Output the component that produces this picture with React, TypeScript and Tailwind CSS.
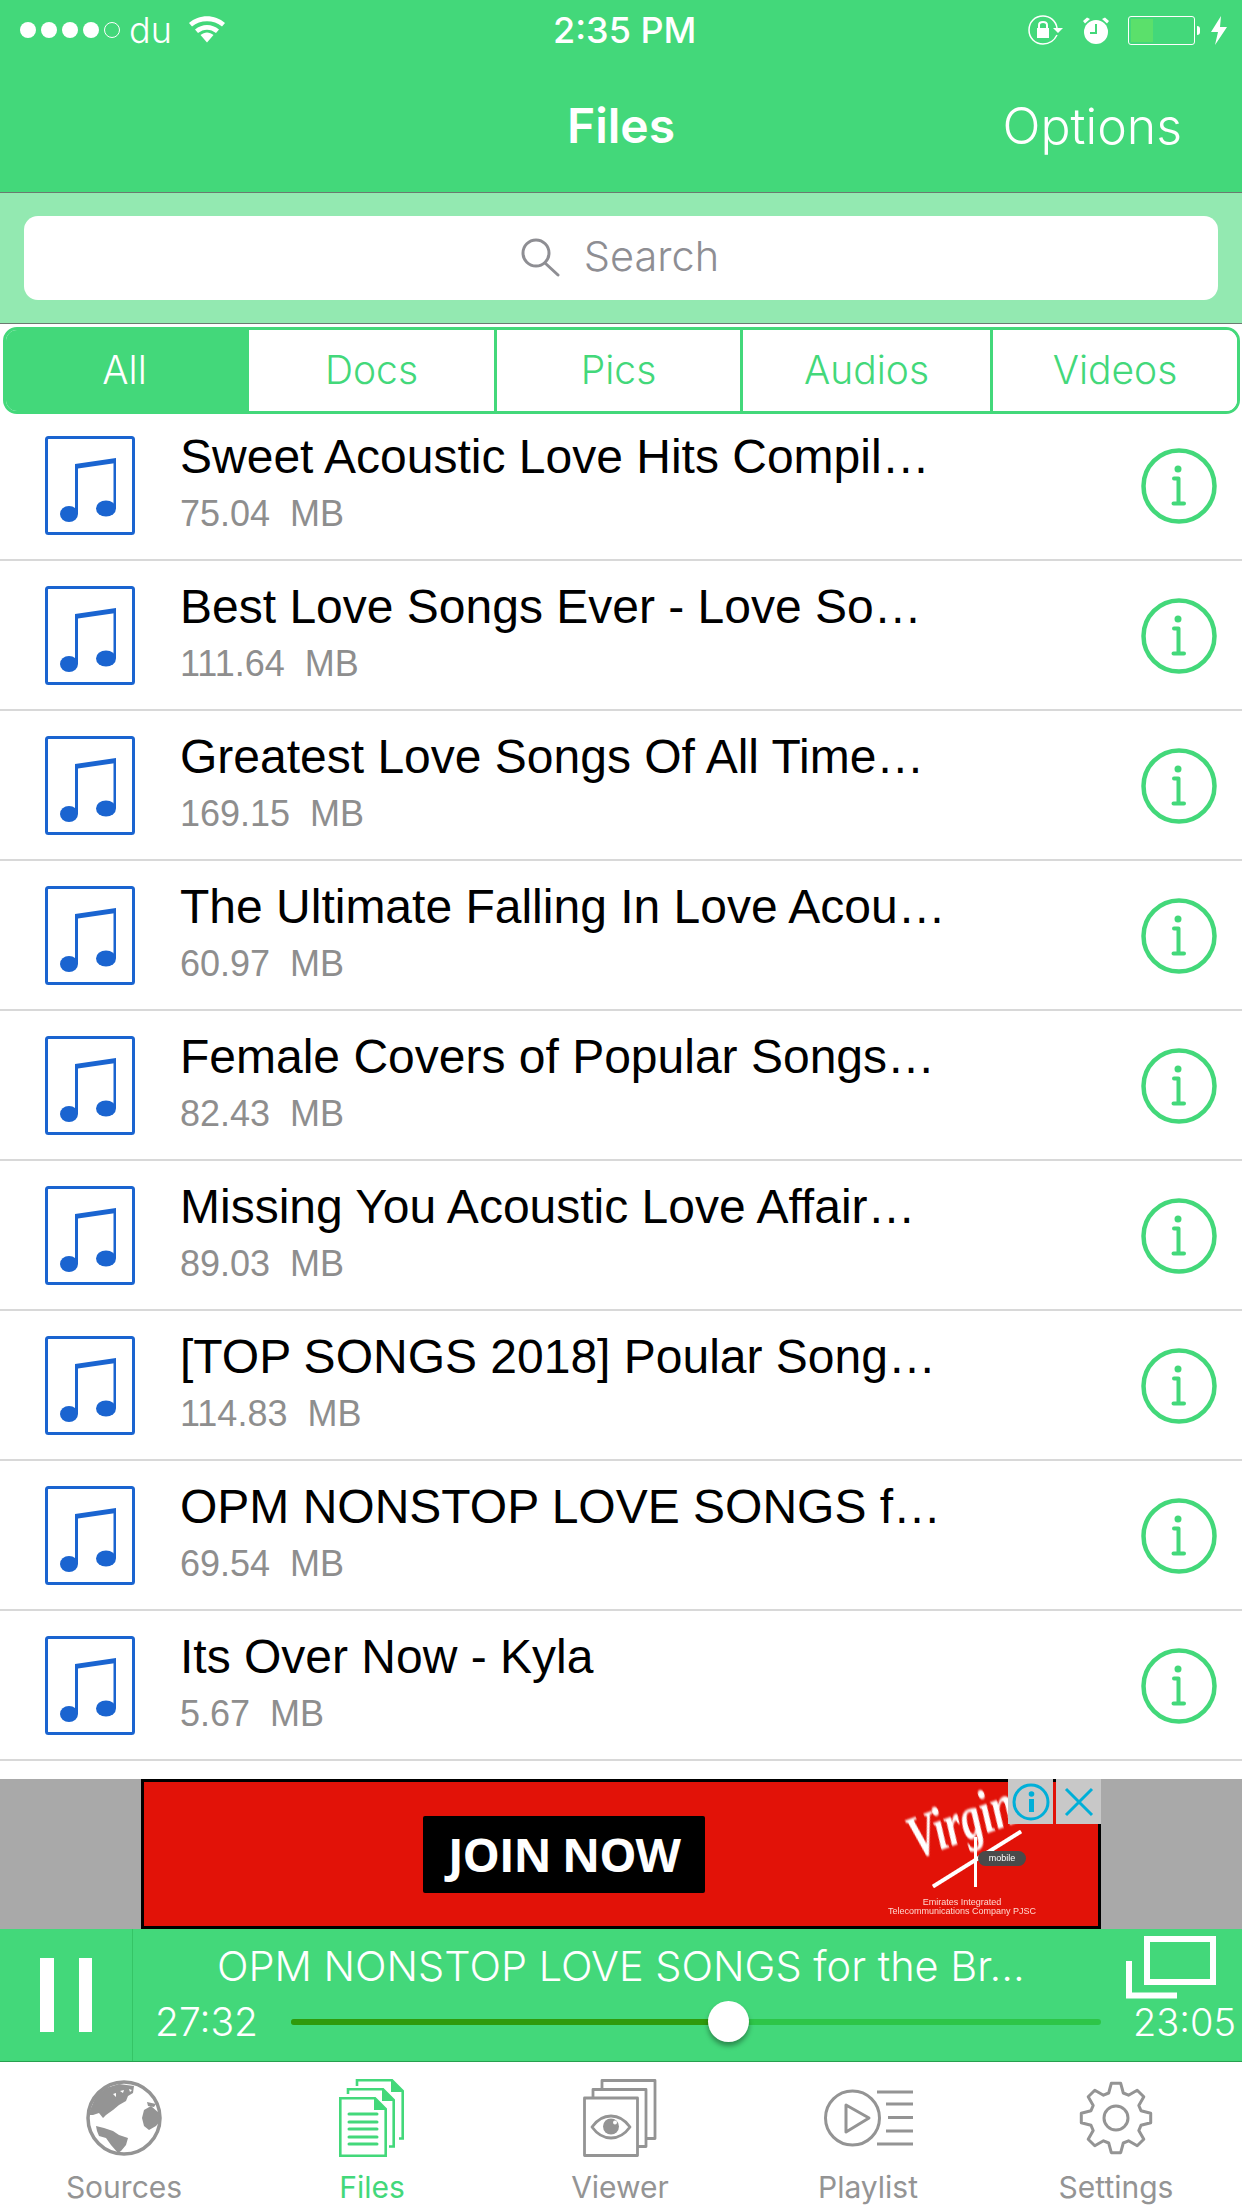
import React from 'react'

const files = [
  { title: 'Sweet Acoustic Love Hits Compil…', size: '75.04' },
  { title: 'Best Love Songs Ever - Love So…', size: '111.64' },
  { title: 'Greatest Love Songs Of All Time…', size: '169.15' },
  { title: 'The Ultimate Falling In Love Acou…', size: '60.97' },
  { title: 'Female Covers of Popular Songs…', size: '82.43' },
  { title: 'Missing You Acoustic Love Affair…', size: '89.03' },
  { title: '[TOP SONGS 2018] Poular Song…', size: '114.83' },
  { title: 'OPM NONSTOP LOVE SONGS f…', size: '69.54' },
  { title: 'Its Over Now - Kyla', size: '5.67' },
]

const GREEN = '#43d87a'
const GRAY = '#949494'

function gearPath(cx: number, cy: number, outer: number, inner: number, teeth: number) {
  const pts: string[] = []
  for (let i = 0; i < teeth; i++) {
    const step = (Math.PI * 2) / teeth
    const a = -Math.PI / 2 + i * step
    const corners: [number, number][] = [
      [inner, a - step * 0.36],
      [outer, a - step * 0.17],
      [outer, a + step * 0.17],
      [inner, a + step * 0.36],
    ]
    corners.forEach(([r, t]) => pts.push(`${(cx + r * Math.cos(t)).toFixed(1)} ${(cy + r * Math.sin(t)).toFixed(1)}`))
  }
  return 'M' + pts.join('L') + 'Z'
}

function NoteIcon() {
  return (
    <svg width="90" height="99" viewBox="0 0 90 99" className="shrink-0">
      <rect x="1.5" y="1.5" width="87" height="96" rx="2" fill="none" stroke="#1a64d0" strokeWidth="3" />
      <path d="M30 28L71 22V27L33 32.5V78H30Z" fill="#1a64d0" />
      <path d="M68.500 25H71V72H68.500Z" fill="#1a64d0" />
      <ellipse cx="24" cy="78" rx="9" ry="8" fill="#1a64d0" />
      <ellipse cx="61" cy="72.500" rx="10" ry="8" fill="#1a64d0" />
    </svg>
  )
}

function InfoIcon() {
  return (
    <svg width="76" height="76" viewBox="0 0 76 76" className="mt-[1px] shrink-0">
      <circle cx="38" cy="38" r="35.500" fill="none" stroke={GREEN} strokeWidth="4.500" />
      <circle cx="37" cy="21" r="3.500" fill={GREEN} />
      <path d="M33 30.500H37.500V55M32.500 55.500H43" fill="none" stroke={GREEN} strokeWidth="4" strokeLinecap="round" strokeLinejoin="round" />
    </svg>
  )
}

function GlobeIcon() {
  return (
    <svg width="76" height="76" viewBox="0 0 76 76">
      <circle cx="38" cy="38" r="36" fill="none" stroke={GRAY} strokeWidth="3.500" />
      <path d="M2 35L10 16L20 8L33 4L48 6L47 13L42 16L40 21L33 25L27 30L20 35L17 38L13 33L7 35Z" fill={GRAY} />
      <path d="M10 46L18 48L27 51L33 55L42 58L40 65L35 71L32 73L25 65L20 58L13 56L11 51Z" fill={GRAY} />
      <path d="M58 30L65 26L73 33L75 40L70 46L63 50L58 46L56 38Z" fill={GRAY} />
      <path d="M61 22L70 24L68 27L62 26Z" fill={GRAY} />
      <path d="M34 11L38 10L37 13ZM27 14L30 13L30 17ZM43 9L46 10L44 12Z" fill="#fff" />
    </svg>
  )
}

function FilesIcon() {
  return (
    <svg width="66" height="78" viewBox="0 0 66 78" fill="none" stroke={GREEN} strokeWidth="2.600">
      <path d="M18 7V1.300H53L63.700 12V59.500H60" />
      <path d="M9 15V10.300H44L54.700 21V67.500H50" />
      <path d="M1.300 19.300H36L46.700 30V76.700H1.300Z" />
      <path d="M52 1L64 13H52Z M43 10L55 22H43Z M35 19L47 31H35Z" fill={GREEN} stroke="none" />
      <path d="M10 35H38M10 43H38M10 50H38M10 58H38M10 65H38" strokeWidth="3" strokeLinecap="round" />
    </svg>
  )
}

function ViewerIcon() {
  return (
    <svg width="74" height="78" viewBox="0 0 74 78" fill="none" stroke={GRAY} strokeWidth="2.800" strokeLinejoin="round">
      <path d="M19 9V1.500H72V59.500H64" />
      <path d="M10 18V10.500H63V67.500H55" />
      <rect x="1.500" y="19" width="53" height="57.500" />
      <path d="M9 48C14 41 21 37 28 37C35 37 42 41 47 48C42 55 35 59 28 59C21 59 14 55 9 48Z" />
      <circle cx="28" cy="47.500" r="8" fill={GRAY} stroke="none" />
      <circle cx="32" cy="43.500" r="2" fill="#fff" stroke="none" />
    </svg>
  )
}

function PlaylistIcon() {
  return (
    <svg width="89" height="58" viewBox="0 0 89 58" fill="none" stroke={GRAY} strokeWidth="3">
      <circle cx="28.500" cy="29" r="27" />
      <path d="M22 16L45 29L22 43Z" strokeLinejoin="round" />
      <path d="M53 3H89M62 15H89M64 28.500H89M62 42H89M53 55H89" />
    </svg>
  )
}

function SettingsIcon() {
  return (
    <svg width="76" height="76" viewBox="0 0 76 76" fill="none" stroke={GRAY} strokeWidth="3" strokeLinejoin="round">
      <path d={gearPath(38, 38, 35, 26, 8)} />
      <circle cx="38" cy="38" r="12" />
    </svg>
  )
}

function StatusBar() {
  return (
    <div className="relative flex h-[60px] items-center font-['Inter','Liberation_Sans',sans-serif] text-white">
      <div className="ml-[20px] flex items-center gap-[5px]">
        <span className="h-4 w-4 rounded-full bg-white" />
        <span className="h-4 w-4 rounded-full bg-white" />
        <span className="h-4 w-4 rounded-full bg-white" />
        <span className="h-4 w-4 rounded-full bg-white" />
        <span className="h-4 w-4 rounded-full border border-white" />
      </div>
      <span className="ml-[9px] text-[36px] leading-none font-light">du</span>
      <svg width="38" height="28" viewBox="0 0 38 28" className="mb-[2px] ml-[16px]">
        <path d="M1 8C11 -1 27 -1 37 8L34 11.500C26 4.500 12 4.500 4 11.500Z" fill="#fff" />
        <path d="M7 14.500C14 8.500 24 8.500 31 14.500L28 18C22.500 13.500 15.500 13.500 10 18Z" fill="#fff" />
        <path d="M12.500 20C16.500 16.500 21.500 16.500 25.500 20L19 27.500Z" fill="#fff" />
      </svg>
      <span className="absolute left-[553px] text-[36px] leading-none font-medium">2:35 PM</span>
      <div className="ml-auto mr-[15px] flex items-center">
        <svg width="36" height="30" viewBox="0 0 36 30" className="mr-[18px]" fill="none" stroke="#fff" strokeWidth="1.500">
          <path d="M29 20C26 26 21 29 15 29C7 29 1 23 1 15C1 7 7 1 15 1C22 1 28 6 29 13" />
          <path d="M25 13H35L30 18Z" fill="#fff" stroke="none" />
          <rect x="9" y="13" width="12" height="10" fill="#fff" stroke="none" />
          <path d="M11 13V10C11 6 19 6 19 10V13" strokeWidth="2" />
        </svg>
        <svg width="28" height="28" viewBox="0 0 28 28" className="mr-[18px]">
          <circle cx="14" cy="16" r="12" fill="#fff" />
          <path d="M1 5L5 1.500L8 3L3 7.500Z M27 5L23 1.500L20 3L25 7.500Z" fill="#fff" />
          <path d="M14 8V17H8" fill="none" stroke={GREEN} strokeWidth="2" />
        </svg>
        <div className="relative h-[29px] w-[67px] rounded-[3px] border border-white">
          <div className="absolute top-[2px] bottom-[2px] left-[2px] w-[22px] bg-[#5be06b]" />
        </div>
        <span className="ml-[2px] h-[9px] w-[3px] rounded-r-full bg-white" />
        <svg width="16" height="29" viewBox="0 0 16 29" className="ml-[11px]">
          <path d="M10 0L0 16H7L4 29L16 11H9Z" fill="#fff" />
        </svg>
      </div>
    </div>
  )
}

function NowPlaying() {
  return (
    <div className="flex h-[133px] border-b border-[#27a04f] bg-[#43d87a] font-['Inter','Liberation_Sans',sans-serif] text-white">
      <div className="flex w-[133px] shrink-0 items-center gap-[25px] border-r border-[#35c466] pl-[40px]">
        <span className="h-[74px] w-[14px] bg-white" />
        <span className="h-[74px] w-[13px] bg-white" />
      </div>
      <div className="relative min-w-0 flex-1">
        <div className="pt-[17px] pl-[84px] text-[41.5px] leading-[40px] font-light whitespace-nowrap">OPM NONSTOP LOVE SONGS for the Br...</div>
        <div className="mt-[16px] flex items-center pl-[22px]">
          <span className="w-[136px] shrink-0 text-[39px] leading-[40px] font-light">27:32</span>
          <div className="relative flex h-[6px] w-[810px] shrink-0 rounded-full bg-[#2dc548]">
            <div className="h-full w-[438px] rounded-l-full bg-[#2f9a0c]" />
            <span className="absolute top-[-18px] left-[417px] h-[41px] w-[41px] rounded-full bg-white shadow-[0_4px_5px_rgba(0,0,0,0.35)]" />
          </div>
        </div>
        <span className="absolute top-[73px] left-[1000px] text-[38px] leading-[40px] font-light">23:05</span>
        <div className="absolute top-[7px] left-[993px]">
          <svg width="90" height="65" viewBox="0 0 90 65" fill="none" stroke="#fff" strokeWidth="6">
            <rect x="21" y="3" width="66" height="43" />
            <path d="M3 25V59.500H51" />
          </svg>
        </div>
      </div>
    </div>
  )
}

const tabs = [
  { label: 'Sources', icon: <GlobeIcon />, active: false },
  { label: 'Files', icon: <FilesIcon />, active: true },
  { label: 'Viewer', icon: <ViewerIcon />, active: false },
  { label: 'Playlist', icon: <PlaylistIcon />, active: false },
  { label: 'Settings', icon: <SettingsIcon />, active: false },
]

export default function App() {
  return (
    <div className="mx-auto h-[2208px] w-[1242px] overflow-hidden bg-white font-['Liberation_Sans',sans-serif]">
      {/* header */}
      <div className="h-[192px] bg-[#43d87a]">
        <StatusBar />
        <div className="grid h-[132px] grid-cols-3 items-start pt-[39px] font-['Inter','Liberation_Sans',sans-serif] text-white">
          <span />
          <span className="text-center text-[48px] leading-[54px] font-semibold">Files</span>
          <span className="pr-[60px] text-right text-[50px] leading-[54px] font-light">Options</span>
        </div>
      </div>

      {/* search */}
      <div className="h-[132px] border-y border-[#6b7a70] bg-[#93e9b1] px-[24px] pt-[23px]">
        <div className="flex h-[84px] items-center justify-center rounded-[14px] bg-white pr-[4px] pb-[3px] font-['Inter','Liberation_Sans',sans-serif] text-[#8e8e93]">
          <svg width="42" height="40" viewBox="0 0 42 40" fill="none" stroke="#8e8e93" strokeWidth="3" className="mr-[23px]">
            <circle cx="17" cy="16" r="13" />
            <path d="M26 26L39 38" strokeLinecap="round" />
          </svg>
          <span className="text-[41.5px] leading-none font-light">Search</span>
        </div>
      </div>

      {/* type filter */}
      <div className="relative z-10 -mb-[3px] px-[3px] pt-[3px]">
        <div className="flex h-[87px] w-[1237px] overflow-hidden rounded-[14px] border-[3px] border-[#43d87a] font-['Inter','Liberation_Sans',sans-serif] text-[39px] font-light text-[#43d87a]">
          <div className="flex w-[243px] items-center justify-center bg-[#43d87a] pr-[6px] text-white">All</div>
          <div className="flex w-[248px] items-center justify-center border-r-[3px] border-[#43d87a] bg-white">Docs</div>
          <div className="flex w-[246px] items-center justify-center border-r-[3px] border-[#43d87a] bg-white">Pics</div>
          <div className="flex w-[250px] items-center justify-center border-r-[3px] border-[#43d87a] bg-white">Audios</div>
          <div className="flex flex-1 items-center justify-center bg-white">Videos</div>
        </div>
      </div>

      {/* file list */}
      <div>
        {files.map((f) => (
          <div key={f.title} className="flex h-[150px] items-center border-b-2 border-[#d8d8d8] pr-[25px] pl-[45px]">
            <NoteIcon />
            <div className="ml-[45px] min-w-0 flex-1 pb-[4px]">
              <div className="-mt-[3px] text-[48px] leading-[56px] whitespace-nowrap text-black">{f.title}</div>
              <div className="mt-[9px] text-[36px] leading-[40px] whitespace-pre text-[#8e8e8e]">{f.size}  MB</div>
            </div>
            <InfoIcon />
          </div>
        ))}
      </div>

      {/* ad */}
      <div className="mt-[18px] flex h-[150px] justify-center bg-[#a9a9a9]">
        <div className="relative flex h-full w-[960px] items-center border-[3px] border-black bg-[#e21208]">
          <div className="ml-[279px] flex h-[77px] w-[282px] items-center justify-center rounded-[2px] bg-black font-['Open_Sans','Liberation_Sans',sans-serif] text-[47px] font-bold tracking-[-1px] text-white">
            JOIN NOW
          </div>
          <span className="absolute top-[18px] left-[762px] -rotate-[20deg] scale-y-[1.45] font-['Liberation_Serif',serif] text-[42px] leading-none font-bold italic text-white blur-[0.6px]">Virgin</span>
          <span className="absolute top-[75px] left-[781px] h-[4px] w-[104px] -rotate-[32deg] bg-white blur-[0.5px]" />
          <span className="absolute top-[55px] left-[830px] h-[50px] w-[3px] bg-white blur-[0.5px]" />
          <span className="absolute top-[69px] left-[834px] h-[15px] w-[48px] rounded-full bg-[#4a4a4a] text-center text-[9px] leading-[15px] text-white blur-[0.4px]">mobile</span>
          <div className="absolute top-[116px] left-[744px] w-[148px] text-center text-[9px] leading-[9px] text-[#ffd8d0] blur-[0.6px]">
            <div>Emirates Integrated</div>
            <div className="whitespace-nowrap">Telecommunications Company PJSC</div>
          </div>
          <div className="absolute -top-[3px] -right-[3px] flex gap-[3px]">
            <div className="flex h-[45px] w-[45px] items-center justify-center bg-[#c8c8c8]">
              <svg width="38" height="38" viewBox="0 0 38 38" fill="none" stroke="#00afd8" strokeWidth="3">
                <circle cx="19" cy="19" r="17" />
                <rect x="17" y="16" width="5" height="13" fill="#00afd8" stroke="none" />
                <circle cx="19.500" cy="11" r="2.800" fill="#00afd8" stroke="none" />
              </svg>
            </div>
            <div className="flex h-[45px] w-[45px] items-center justify-center bg-[#c8c8c8]">
              <svg width="30" height="30" viewBox="0 0 30 30" fill="none" stroke="#00afd8" strokeWidth="3">
                <path d="M2 2L28 28M28 2L2 28" />
              </svg>
            </div>
          </div>
        </div>
      </div>

      <NowPlaying />

      {/* tab bar */}
      <div className="grid h-[146px] grid-cols-[repeat(5,248px)] font-['Inter','Liberation_Sans',sans-serif]">
        {tabs.map((t) => (
          <div key={t.label} className="flex flex-col items-center">
            <div className="flex h-[112px] items-center">{t.icon}</div>
            <span className={t.active ? 'text-[30px] leading-[26px] text-[#43d87a]' : 'text-[30px] leading-[26px] text-[#949494]'}>{t.label}</span>
          </div>
        ))}
      </div>
    </div>
  )
}
